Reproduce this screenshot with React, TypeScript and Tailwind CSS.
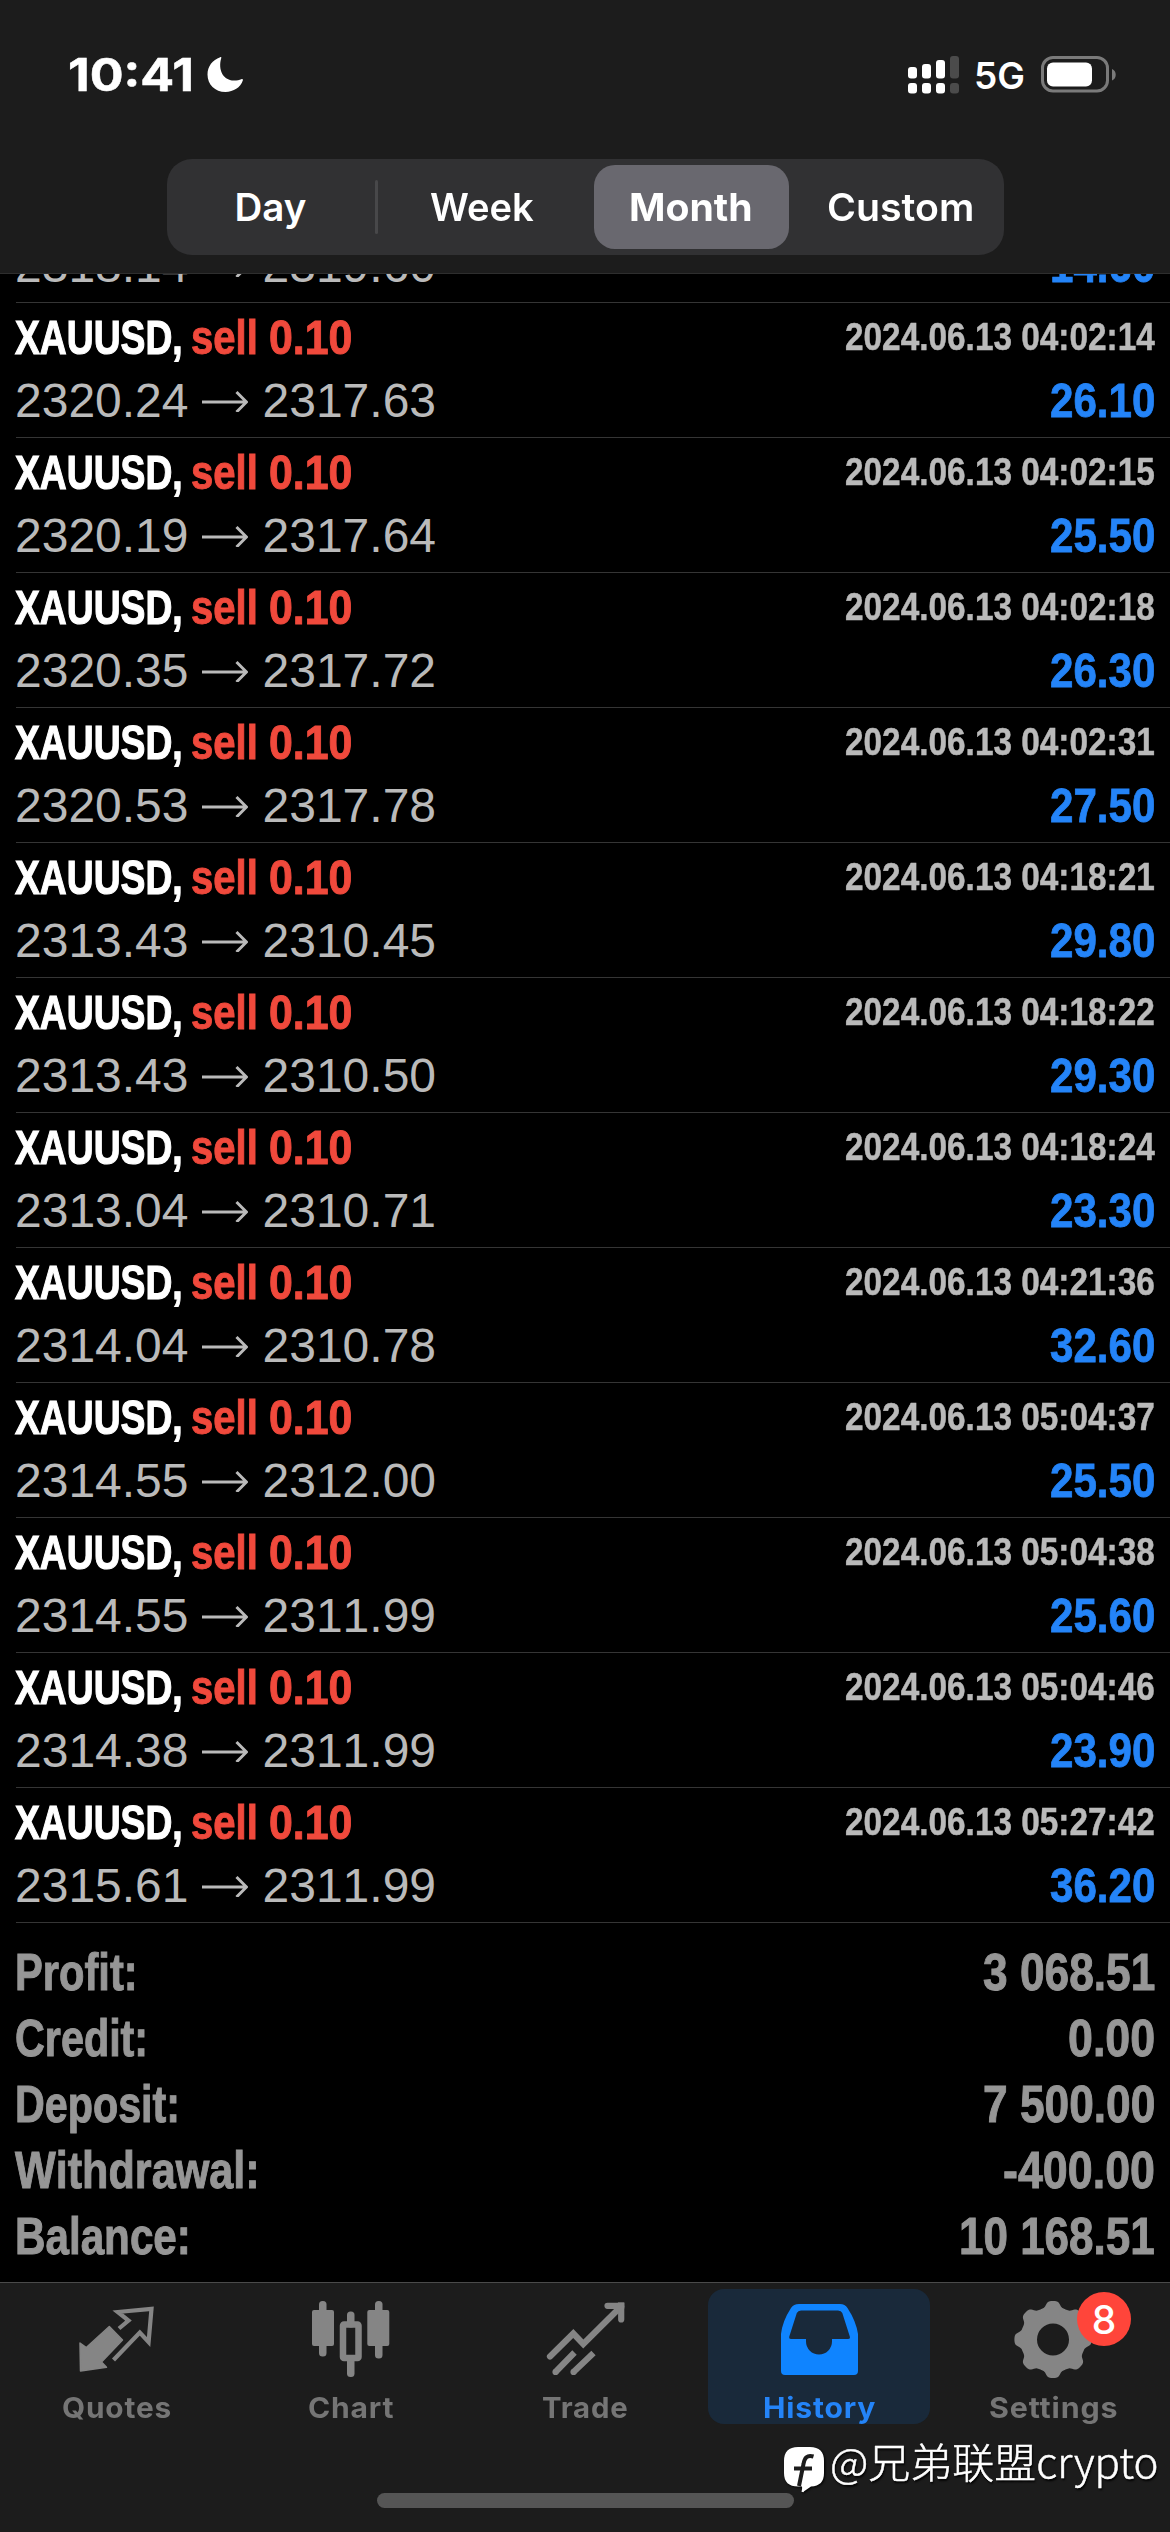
import { useLayoutEffect, useRef, useState } from "react";
import type { ReactNode } from "react";
import clsx from "clsx";

const deals = [
  ["2320.24", "2317.63", "2024.06.13 04:02:14", "26.10"],
  ["2320.19", "2317.64", "2024.06.13 04:02:15", "25.50"],
  ["2320.35", "2317.72", "2024.06.13 04:02:18", "26.30"],
  ["2320.53", "2317.78", "2024.06.13 04:02:31", "27.50"],
  ["2313.43", "2310.45", "2024.06.13 04:18:21", "29.80"],
  ["2313.43", "2310.50", "2024.06.13 04:18:22", "29.30"],
  ["2313.04", "2310.71", "2024.06.13 04:18:24", "23.30"],
  ["2314.04", "2310.78", "2024.06.13 04:21:36", "32.60"],
  ["2314.55", "2312.00", "2024.06.13 05:04:37", "25.50"],
  ["2314.55", "2311.99", "2024.06.13 05:04:38", "25.60"],
  ["2314.38", "2311.99", "2024.06.13 05:04:46", "23.90"],
  ["2315.61", "2311.99", "2024.06.13 05:27:42", "36.20"],
];

const summary = [
  { label: "Profit:", lw: "w-[123px]", value: "3 068.51", vw: "w-[172px]" },
  { label: "Credit:", lw: "w-[133px]", value: "0.00", vw: "w-[87px]" },
  { label: "Deposit:", lw: "w-[165px]", value: "7 500.00", vw: "w-[172px]" },
  { label: "Withdrawal:", lw: "w-[245px]", value: "-400.00", vw: "w-[152px]" },
  { label: "Balance:", lw: "w-[176px]", value: "10 168.51", vw: "w-[196px]" },
];

/* Text condensed or widened horizontally to fill the width given in className. */
function Fit({ className, children }: { className: string; children: ReactNode }) {
  const box = useRef<HTMLSpanElement>(null);
  const text = useRef<HTMLSpanElement>(null);
  const [scale, setScale] = useState(1);
  useLayoutEffect(() => {
    if (box.current && text.current) {
      setScale(box.current.offsetWidth / text.current.offsetWidth);
    }
  }, []);
  return (
    <span ref={box} className={clsx("inline-block shrink-0 whitespace-nowrap", className)}>
      <span ref={text} className="inline-block origin-left" style={{ transform: `scaleX(${scale})` }}>
        {children}
      </span>
    </span>
  );
}

function StatusBar() {
  return (
    <div className="flex h-[41px] items-center pr-[53px] pl-[68px] text-white">
      <Fit className="w-[126px] text-[45px] leading-[41px] font-bold [-webkit-text-stroke:0.5px_white]">10:41</Fit>
      <svg className="ml-[12px] h-[37px] w-[38px]" viewBox="0 0 38 37" fill="white">
        <path d="M14.2 1.2C15 .8 15.6 1.3 15.2 2.3C12 13 16.5 24.500 28 24.600C31 24.600 33.500 24 35.300 23.200C36.500 22.800 37.200 23.500 36.800 24.600C34.500 31.500 27.500 36 19.500 36C9 36 1.500 28.500 1.500 18.500C1.500 10.500 6.500 3.800 14.200 1.200Z" />
      </svg>
      <div className="grow" />
      <svg className="h-[38px] w-[52px]" viewBox="0 0 52 38" fill="white">
        <rect x="0" y="11" width="9" height="11.500" rx="3" />
        <rect x="14" y="8" width="9" height="14.500" rx="3" />
        <rect x="28" y="4" width="9" height="18.500" rx="3" />
        <rect x="42" y="0" width="9" height="22.500" rx="3" fill="#4b4b4b" />
        <rect x="0" y="27" width="9" height="10.500" rx="3" />
        <rect x="14" y="27" width="9" height="10.500" rx="3" />
        <rect x="28" y="27" width="9" height="10.500" rx="3" />
        <rect x="42" y="27" width="9" height="10.500" rx="3" fill="#4b4b4b" />
      </svg>
      <Fit className="mt-[2px] ml-[14px] w-[51px] text-[37px] leading-[41px] font-semibold">5G</Fit>
      <svg className="ml-[16px] h-[37px] w-[76px]" viewBox="0 0 76 37">
        <rect x="1.500" y="1.500" width="65" height="33.500" rx="10.500" fill="none" stroke="#7a7a7a" strokeWidth="3" />
        <rect x="6" y="6.500" width="45" height="24" rx="6" fill="white" />
        <path d="M71 13C76 15 76 22.500 71 24.500Z" fill="#7a7a7a" />
      </svg>
    </div>
  );
}

function Segments() {
  const text = "text-[38.500px] leading-[54px] font-semibold";
  return (
    <div className="mx-auto mt-[64px] flex h-[96px] w-[837px] items-center rounded-[25px] bg-[#313133] text-white">
      <div className="flex w-[208px] justify-center">
        <Fit className={clsx("w-[72px]", text)}>Day</Fit>
      </div>
      <div className="h-[54px] w-[3px] rounded-full bg-[#48484a]" />
      <div className="flex w-[208px] justify-center">
        <Fit className={clsx("w-[104px]", text)}>Week</Fit>
      </div>
      <div className="ml-[8px] flex h-[84px] w-[195px] shrink-0 items-center justify-center rounded-[21px] bg-[#69686f]">
        <Fit className="w-[124px] text-[38.500px] leading-[54px] font-bold">Month</Fit>
      </div>
      <div className="ml-[8px] flex w-[207px] justify-center">
        <Fit className={clsx("w-[147px]", text)}>Custom</Fit>
      </div>
    </div>
  );
}

function Prices({ open, close, profit }: { open: string; close: string; profit: string }) {
  return (
    <div className="flex h-[60px] items-center text-[48px] leading-[60px] text-[#bababa] [font-kerning:none]">
      <span className="mt-[2px] -ml-[1px]">{open}</span>
      <svg className="mr-[15px] ml-[13px] h-[24px] w-[46px]" viewBox="0 0 46 24" fill="none" stroke="currentColor" strokeWidth="3">
        <path d="M0 14H44M34.500 4L44.500 14L34.500 24" />
      </svg>
      <span className="mt-[2px]">{close}</span>
      <Fit className="ml-auto w-[105px] text-[48.500px] font-bold text-[#2484f8] [-webkit-text-stroke:0.8px_#2484f8]">{profit}</Fit>
    </div>
  );
}

function Deal({ deal }: { deal: string[] }) {
  const [open, close, time, profit] = deal;
  return (
    <div className="ml-4 flex h-[135px] flex-col border-b border-[#353535] pt-[4px] pr-[15px]">
      <div className="flex h-[63px] items-start font-bold">
        <Fit className="-ml-[1px] w-[168px] text-[49px] leading-[60px] text-white [-webkit-text-stroke:1.2px_white]">XAUUSD,</Fit>
        <div className="flex text-[49px] leading-[60px] text-[#f0493c] [-webkit-text-stroke:1px_#f0493c]">
          <Fit className="ml-[8px] w-[67px]">sell</Fit>
          <Fit className="ml-[11px] w-[83px]">0.10</Fit>
        </div>
        <Fit className="ml-auto w-[310px] text-[39.500px] leading-[58px] text-[#bababa] [-webkit-text-stroke:0.5px_#bababa] [font-kerning:none]">
          {time}
        </Fit>
      </div>
      <Prices open={open} close={close} profit={profit} />
    </div>
  );
}

function Summary() {
  return (
    <div className="flex flex-col pt-4 pr-[15px] pl-[15px] text-[52.500px] leading-[66px] font-bold text-[#969696] [-webkit-text-stroke:1px_#969696] [font-kerning:none]">
      {summary.map((s) => (
        <div key={s.label} className="flex h-[66px] justify-between">
          <Fit className={s.lw}>{s.label}</Fit>
          <Fit className={s.vw}>{s.value}</Fit>
        </div>
      ))}
    </div>
  );
}

const iconClass = "h-[90px] w-[100px] shrink-0";

function QuotesIcon() {
  return (
    <svg className={iconClass} viewBox="67 2289 100 90">
      <path
        d="M80 2343L86.300 2347.500L109.300 2326.500L122.500 2340L101.500 2362L106.500 2367.300L80.500 2371Z"
        fill="#858585"
        stroke="#858585"
        strokeWidth="1.500"
        strokeLinejoin="round"
      />
      <path d="M119 2328.500L128.500 2320.500L117.800 2312L151.500 2308.800L148.600 2342L139.800 2332.500L113.500 2360" fill="none" stroke="#858585" strokeWidth="4.200" />
    </svg>
  );
}

function ChartIcon() {
  return (
    <svg className={iconClass} viewBox="301 2289 100 90" fill="#858585">
      <rect x="312" y="2310" width="22" height="36" rx="2" />
      <rect x="319" y="2301" width="7.500" height="55.500" rx="3.500" />
      <rect x="367.300" y="2310" width="22" height="36" rx="2" />
      <rect x="375" y="2301" width="7.500" height="57.500" rx="3.500" />
      <rect x="347" y="2311.500" width="7.500" height="16" rx="3.500" />
      <rect x="347" y="2355" width="7.500" height="22" rx="3.500" />
      <rect x="343" y="2324.500" width="15.500" height="33.500" rx="1" fill="none" stroke="#858585" strokeWidth="6.500" />
    </svg>
  );
}

function TradeIcon() {
  return (
    <svg className={iconClass} viewBox="535 2289 100 90" fill="none" stroke="#858585" strokeWidth="6.200">
      <path d="M550 2356.500L573.300 2333.500L583.300 2344L621 2306.500" strokeLinecap="round" />
      <path d="M607.500 2305.800H621.200V2319.500" strokeLinecap="round" />
      <path d="M621 2305.500h.2" strokeLinecap="square" />
      <path d="M555.500 2372L574.500 2352.500M573.500 2372L593.500 2353" />
      <path d="M555.500 2372h.1M573.500 2372h.1" strokeLinecap="round" />
    </svg>
  );
}

function HistoryIcon() {
  return (
    <svg className={iconClass} viewBox="769 2289 100 90" fill="#0f84ff" fillRule="evenodd">
      <path d="M799 2304H840Q845 2304 847.500 2308Q856 2321 858 2334V2371Q858 2375 854 2375H785Q781 2375 781 2371V2334Q782.500 2321 791 2308Q793.500 2304 799 2304ZM801 2310.500Q798 2310.500 796.800 2313L789.300 2336.500Q788.800 2339 791 2339H806V2341.500A13 13 0 0 0 832 2341.500V2339H848Q850.500 2339 849.800 2336.500L842.300 2313Q841.300 2310.500 838 2310.500Z" />
    </svg>
  );
}

const gear = Array.from({ length: 240 }, (_, i) => {
  const a = (i / 240) * Math.PI * 2;
  const r = 35.6 + (3 * Math.tanh(1.8 * Math.cos(8 * a))) / Math.tanh(1.8);
  return `${(1053 + r * Math.cos(a)).toFixed(2)} ${(2339.5 + r * Math.sin(a)).toFixed(2)}`;
}).join("L");

function SettingsIcon() {
  return (
    <svg className={iconClass} viewBox="1003 2289 100 90" fill="#858585" fillRule="evenodd">
      <path d={`M${gear}ZM1037 2339.500a16 16 0 1 0 32 0a16 16 0 1 0 -32 0Z`} />
    </svg>
  );
}

const tabs = [
  { label: "Quotes", icon: <QuotesIcon />, width: "w-[110px]" },
  { label: "Chart", icon: <ChartIcon />, width: "w-[86px]" },
  { label: "Trade", icon: <TradeIcon />, width: "w-[87px]" },
  { label: "History", icon: <HistoryIcon />, width: "w-[113px]", active: true },
  { label: "Settings", icon: <SettingsIcon />, width: "w-[129px]", badge: "8" },
];

function TabBar() {
  return (
    <nav className="relative h-[250px] shrink-0 border-t border-[#4a4a4a] bg-[#1c1c1c] pt-[6px]">
      <div className="grid grid-cols-5">
        {tabs.map((t) => (
          <div
            key={t.label}
            className={clsx("relative mx-[6px] flex h-[135px] flex-col items-center rounded-[16px]", t.active && "bg-[#19293a]")}
          >
            {t.icon}
            <Fit
              className={clsx(
                "mt-[11px] text-[29px] leading-[36px] font-bold tracking-[0.8px]",
                t.width,
                t.active ? "text-[#2484f8]" : "text-[#757575]",
              )}
            >
              {t.label}
            </Fit>
            {t.badge && (
              <span className="absolute top-[3px] left-[135px] flex size-[54px] items-center justify-center rounded-full bg-[#ff453a] text-[39px] leading-none font-medium text-white">
                {t.badge}
              </span>
            )}
          </div>
        ))}
      </div>
      <div className="absolute bottom-[24px] left-[377px] h-[15px] w-[417px] rounded-full bg-[#555555]" />
      <div className="absolute right-[11px] bottom-[39px] flex items-end text-white">
        <svg className="h-[48px] w-[42px] drop-shadow-[1px_1px_1px_black]" viewBox="0 0 42 48">
          <path d="M15 2H27Q41 2 41 16V28Q41 41 28 41.500L20 47L19 41.500H15Q1 41.500 1 28V16Q1 2 15 2Z" fill="white" />
          <path d="M30.500 11.500C24 9.500 21.500 13 20.500 19L16 41" fill="none" stroke="#1c1c1c" strokeWidth="4" />
          <path d="M24 24L19.500 47" fill="none" stroke="white" strokeWidth="2" />
          <path d="M11 23.500H29" stroke="#1c1c1c" strokeWidth="4" />
        </svg>
        <Fit className="mb-[8px] ml-[5px] w-[329px] font-['Noto_Sans_CJK_SC',sans-serif] text-[41px] leading-[50px] font-light [-webkit-text-stroke:0.5px_white] [text-shadow:1px_2px_2px_black]">
          @兄弟联盟crypto
        </Fit>
      </div>
    </nav>
  );
}

export default function App() {
  return (
    <div className="flex h-[2532px] w-[1170px] flex-col overflow-hidden bg-black font-['Inter',sans-serif]">
      <header className="z-10 h-[274px] shrink-0 border-b border-[#2e2e2e] bg-[#1c1c1c] pt-[54px]">
        <StatusBar />
        <Segments />
      </header>
      <main className="min-h-0 grow overflow-hidden font-['Liberation_Sans',Arial,sans-serif]">
        <div className="-mt-[39px]">
          <div className="ml-4 h-[68px] border-b border-[#353535] pr-[15px]">
            <Prices open="2318.14" close="2319.60" profit="14.60" />
          </div>
          {deals.map((d) => (
            <Deal key={d[2]} deal={d} />
          ))}
          <Summary />
        </div>
      </main>
      <TabBar />
    </div>
  );
}
